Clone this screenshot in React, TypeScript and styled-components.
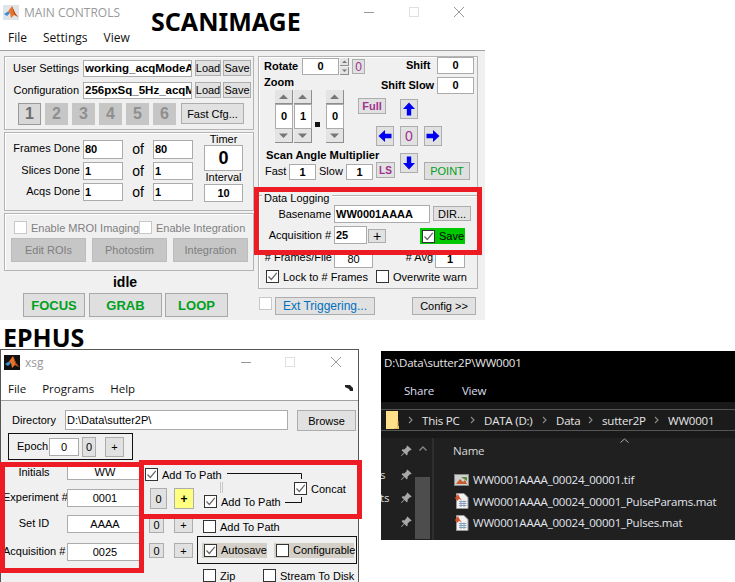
import styled, { createGlobalStyle } from "styled-components";
import { BsPinAngleFill } from "react-icons/bs";

const GlobalStyle = createGlobalStyle`
  html, body {
    margin: 0;
    padding: 0;
    background: #fff;
  }
  * {
    box-sizing: border-box;
  }
`;

const Desktop = styled.div`
  position: relative;
  width: 735px;
  height: 582px;
  overflow: hidden;
  background: #fff;
  font-family: "Liberation Sans", Arial, sans-serif;
  font-size: 11px;
  color: #000;
`;

const Caption = styled.div<{ $x: number; $y: number; $size: number }>`
  position: absolute;
  left: ${(p) => p.$x}px;
  top: ${(p) => p.$y}px;
  font-family: "Noto Sans", sans-serif;
  font-weight: 700;
  font-size: ${(p) => p.$size}px;
  line-height: 30px;
  z-index: 3;
`;

const Highlight = styled.div<{ $x: number; $y: number; $w: number; $h: number }>`
  position: absolute;
  left: ${(p) => p.$x}px;
  top: ${(p) => p.$y}px;
  width: ${(p) => p.$w}px;
  height: ${(p) => p.$h}px;
  border: 5px solid #ed1c24;
  z-index: 4;
`;

/* ---- windows ---- */

const MainWindow = styled.div`
  position: absolute;
  left: 0;
  top: 0;
  width: 485px;
  height: 320px;
  background: #f0f0f0;
`;

const XsgWindow = styled.div`
  position: absolute;
  left: 0;
  top: 349px;
  width: 359px;
  height: 233px;
  overflow: hidden;
  background: #f0f0f0;
  border: 1px solid #555;
  border-bottom: none;
`;

const TitleBar = styled.div`
  height: 24px;
  display: flex;
  align-items: center;
  padding-left: 3px;
  background: #fff;
  color: #999;
  font-family: "Open Sans", sans-serif;
  font-size: 12px;
`;

const WindowTitle = styled.span`
  margin-left: 5px;
`;

const WinButtons = styled.svg<{ $right: number }>`
  margin-left: auto;
  margin-right: ${(p) => p.$right}px;
`;

const MenuBar = styled.div<{ $gap: number; $pad: number; $pt?: number; $size?: number }>`
  height: 27px;
  display: flex;
  align-items: center;
  gap: ${(p) => p.$gap}px;
  padding: ${(p) => p.$pt ?? 0}px 0 0 ${(p) => p.$pad}px;
  background: #fff;
  border-bottom: 1px solid #a0a0a0;
  font-family: "Open Sans", sans-serif;
  font-size: ${(p) => p.$size ?? 12}px;
  color: #111;
`;

const ResizeMark = styled.svg`
  margin-left: auto;
  margin-right: 5px;
`;

const MainBody = styled.div`
  display: flex;
  padding: 5px 0 0 4px;
  gap: 4px;
`;

const Col = styled.div<{ $w: number }>`
  width: ${(p) => p.$w}px;
  flex-shrink: 0;
  display: flex;
  flex-direction: column;
`;

const Panel = styled.div<{ $h: number; $mt?: number }>`
  position: relative;
  height: ${(p) => p.$h}px;
  margin-top: ${(p) => p.$mt ?? 0}px;
  border: 1px solid #b4b4b4;
  box-shadow: inset 1px 1px 0 #fff;
`;

const Row = styled.div<{ $mt?: number; $pl?: number; $gap?: number }>`
  display: flex;
  align-items: flex-start;
  margin-top: ${(p) => p.$mt ?? 0}px;
  padding-left: ${(p) => p.$pl ?? 0}px;
  gap: ${(p) => p.$gap ?? 0}px;
`;

const Label = styled.div<{ $w?: number; $align?: string; $h?: number; $bold?: boolean; $size?: number; $ml?: number; $mt?: number }>`
  width: ${(p) => (p.$w ? `${p.$w}px` : "auto")};
  height: ${(p) => p.$h ?? 17}px;
  line-height: ${(p) => p.$h ?? 17}px;
  margin-left: ${(p) => p.$ml ?? 0}px;
  margin-top: ${(p) => p.$mt ?? 0}px;
  text-align: ${(p) => p.$align ?? "left"};
  font-size: ${(p) => p.$size ?? 11}px;
  font-weight: ${(p) => (p.$bold ? 700 : 400)};
  white-space: nowrap;
  flex-shrink: 0;
`;

const Field = styled.div<{ $w: number; $h: number; $align?: string; $bold?: boolean; $size?: number; $ml?: number; $mt?: number }>`
  width: ${(p) => p.$w}px;
  height: ${(p) => p.$h}px;
  line-height: ${(p) => p.$h - 2}px;
  margin-left: ${(p) => p.$ml ?? 0}px;
  margin-top: ${(p) => p.$mt ?? 0}px;
  padding: 0 1px;
  flex-shrink: 0;
  overflow: hidden;
  white-space: nowrap;
  background: #fff;
  border: 1px solid #ababab;
  text-align: ${(p) => p.$align ?? "left"};
  font-size: ${(p) => p.$size ?? 11}px;
  font-weight: ${(p) => (p.$bold ? 700 : 400)};
`;

const Btn = styled.button<{ $w: number; $h: number; $ml?: number; $mt?: number; $color?: string; $bold?: boolean; $size?: number; $bg?: string }>`
  width: ${(p) => p.$w}px;
  height: ${(p) => p.$h}px;
  margin: ${(p) => p.$mt ?? 0}px 0 0 ${(p) => p.$ml ?? 0}px;
  padding: 0;
  display: flex;
  align-items: center;
  justify-content: center;
  flex-shrink: 0;
  background: ${(p) => p.$bg ?? "#e1e1e1"};
  border: 1px solid #adadad;
  color: ${(p) => p.$color ?? "#000"};
  font-family: "Liberation Sans", Arial, sans-serif;
  font-size: ${(p) => p.$size ?? 11}px;
  font-weight: ${(p) => (p.$bold ? 700 : 400)};
  white-space: nowrap;
`;

const CheckWrap = styled.div<{ $w?: number; $bg?: string; $h?: number; $color?: string; $pl?: number }>`
  display: flex;
  align-items: center;
  gap: 4px;
  flex-shrink: 0;
  width: ${(p) => (p.$w ? `${p.$w}px` : "auto")};
  height: ${(p) => p.$h ?? 13}px;
  padding-left: ${(p) => p.$pl ?? 0}px;
  background: ${(p) => p.$bg ?? "transparent"};
  color: ${(p) => p.$color ?? "#000"};
  white-space: nowrap;
`;

const CheckBox = styled.span<{ $muted?: boolean }>`
  width: 13px;
  height: 13px;
  display: flex;
  align-items: center;
  justify-content: center;
  flex-shrink: 0;
  background: #fff;
  border: 1px solid ${(p) => (p.$muted ? "#c8c8c8" : "#333")};
`;

interface CheckProps {
  label?: string;
  checked?: boolean;
  muted?: boolean;
  w?: number;
  h?: number;
  bg?: string;
  pl?: number;
  color?: string;
}

function Check({ label, checked, muted, w, h, bg, pl, color }: CheckProps) {
  return (
    <CheckWrap $w={w} $h={h} $bg={bg} $pl={pl} $color={color}>
      <CheckBox $muted={muted}>
        {checked && (
          <svg width="11" height="11" viewBox="0 0 11 11">
            <path d="M1.5 5.5 L4.3 8.5 L9.8 1.8" fill="none" stroke="#666" strokeWidth="1.2" />
          </svg>
        )}
      </CheckBox>
      {label && <span>{label}</span>}
    </CheckWrap>
  );
}

function MatlabLogo({ dark }: { dark?: boolean }) {
  return (
    <svg width="16" height="15" viewBox="0 0 16 15">
      <rect width="16" height="15" fill={dark ? "#111" : "#dfe4e8"} />
      <path d="M1 9 L5 6.5 L7 8 L4 11 Z" fill="#3b8fd0" />
      <path d="M5 6.5 L9 1 L12 8 L15 12 L11 10 L8 13 L7 8 Z" fill="#e8742a" />
      <path d="M9 1 L12 8 L15 12 L11 9 Z" fill="#b5421c" />
    </svg>
  );
}

function WindowControls({ right, gapA, gapB }: { right: number; gapA: number; gapB: number }) {
  return (
    <WinButtons $right={right} width={gapB + 11} height="12" viewBox={`0 0 ${gapB + 11} 12`}>
      <path d="M0 6.5 H10" stroke="#999" />
      <rect x={gapA + 0.5} y="1.5" width="9" height="9" fill="none" stroke="#e0e0e0" />
      <path d={`M${gapB} 1 L${gapB + 10} 11 M${gapB + 10} 1 L${gapB} 11`} stroke="#999" />
    </WinButtons>
  );
}

function Arrow({ dir }: { dir: "up" | "down" | "left" | "right" }) {
  const rot = { up: 0, right: 90, down: 180, left: 270 }[dir];
  return (
    <svg width="14" height="14" viewBox="0 0 14 14">
      <path transform={`rotate(${rot} 7 7)`} d="M7 0.5 L13 7 H9.2 V13.5 H4.8 V7 H1 Z" fill="#0000f0" />
    </svg>
  );
}

function Tri({ down, size = 9, color = "#777" }: { down?: boolean; size?: number; color?: string }) {
  return (
    <svg width={size} height={size / 2 + 1} viewBox="0 0 10 6">
      <path d={down ? "M0 0.5 H10 L5 5.5 Z" : "M0 5.5 H10 L5 0.5 Z"} fill={color} />
    </svg>
  );
}

/* ---- scanimage, left column ---- */

const NumberBtn = styled(Btn).attrs({ $w: 23, $h: 22, $bold: true, $size: 16 })<{ $on?: boolean }>`
  background: ${(p) => (p.$on ? "#d8d8d8" : "#c6c6c6")};
  color: ${(p) => (p.$on ? "#6e6e6e" : "#8f8f8f")};
  border-color: ${(p) => (p.$on ? "#9a9a9a" : "#c6c6c6")};
`;

const DoneGrid = styled.div`
  display: grid;
  grid-template-columns: 78px 40px 30px 40px;
  grid-template-rows: 19px 18px 18px;
  row-gap: 3px;
  margin-top: 7px;
  width: 188px;
`;

const DoneLabel = styled.div`
  padding-right: 3px;
  text-align: right;
  line-height: 17px;
  white-space: nowrap;
`;

const Of = styled.div`
  text-align: center;
  font-size: 14px;
  line-height: 18px;
`;

const TimerCol = styled.div`
  width: 39px;
  margin-left: 11px;
  display: flex;
  flex-direction: column;
  align-items: center;
`;

const DimBtn = styled(Btn).attrs({ $w: 75, $h: 24 })`
  background: #c6c6c6;
  border-color: #bcbcbc;
  color: #7f7f7f;
`;

const IdleText = styled.div`
  height: 22px;
  line-height: 22px;
  padding-right: 8px;
  text-align: center;
  font-weight: 700;
  font-size: 14px;
`;

const GoBtn = styled(Btn).attrs({ $h: 24, $color: "#00a020", $bold: true, $size: 13 })`
  background: #dfdfdf;
  border-color: #a8a8a8;
`;

/* ---- scanimage, right column ---- */

const SplitPanel = styled(Panel)`
  display: flex;
`;

const SpinColumn = styled.div`
  display: flex;
  flex-direction: column;
  width: 18px;
  flex-shrink: 0;
`;

const SpinBtn = styled.button<{ $h?: number }>`
  height: ${(p) => p.$h ?? 14}px;
  padding: 0;
  display: flex;
  align-items: center;
  justify-content: center;
  background: #e4e4e4;
  border: none;
  border-right: 1px solid #8e8e8e;
  border-bottom: 1px solid #8e8e8e;
`;

const SpinValue = styled.div`
  height: 25px;
  line-height: 23px;
  text-align: center;
  font-weight: 700;
  font-size: 11px;
  background: #fff;
  border: 1px solid #ababab;
`;

const Dot = styled.span`
  width: 5px;
  height: 5px;
  margin: 32px 5px 0 2px;
  background: #111;
  flex-shrink: 0;
`;

const RotateSpin = styled.div`
  width: 9px;
  height: 17px;
  margin-left: 1px;
  display: flex;
  flex-direction: column;
  gap: 1px;
`;

const Pad = styled.div`
  display: grid;
  grid-template-columns: 18px 18px 18px;
  grid-template-rows: 20px 20px 20px;
  column-gap: 6px;
  row-gap: 7px;
  margin: 5px 0 0 -20px;
  width: 66px;
`;

const PadBtn = styled(Btn).attrs({ $w: 18, $h: 20 })<{ $col: number; $row: number }>`
  grid-column: ${(p) => p.$col};
  grid-row: ${(p) => p.$row};
`;

const PointBtn = styled(Btn).attrs({ $w: 46, $h: 18, $color: "#00a020", $size: 11 })`
  grid-column: 3;
  grid-row: 3;
  margin-top: 9px;
  background: #dfdfdf;
`;

const Legend = styled.div`
  position: absolute;
  left: 3px;
  top: -5px;
  width: 70px;
  padding-left: 2px;
  background: #f0f0f0;
  line-height: 14px;
  white-space: nowrap;
`;

const SaveTag = styled.div`
  width: 45px;
  height: 16px;
  margin: 2px 12px 0 auto;
  display: flex;
  align-items: center;
  gap: 4px;
  padding-left: 2px;
  background: #00c800;
  white-space: nowrap;
`;

const GrowSpacer = styled.div`
  flex: 1;
`;

/* ---- xsg ---- */

const DirRow = styled.div`
  display: flex;
  align-items: flex-start;
  padding: 9px 0 0 11px;
`;

const EpochBox = styled.div`
  width: 125px;
  height: 27px;
  margin: 2px 0 0 7px;
  display: flex;
  align-items: flex-start;
  border: 1px solid #111;
  padding: 3px 0 0 8px;
`;

const XsgMain = styled.div`
  display: flex;
  margin-top: 4px;
`;

const NamingGrid = styled.div`
  width: 144px;
  flex-shrink: 0;
  display: grid;
  grid-template-columns: 62px 76px;
  grid-template-rows: 25px 26px 28px 18px;
  column-gap: 2px;
  padding-left: 2px;
`;

const NamingLabel = styled.div`
  text-align: center;
  line-height: 16px;
  white-space: nowrap;
`;

const Pathways = styled.div`
  position: relative;
  flex: 1;
  display: flex;
  flex-direction: column;
`;

const ConcatGroup = styled.div`
  display: flex;
  height: 52px;
`;

const ConcatLeft = styled.div`
  width: 149px;
  flex-shrink: 0;
  display: flex;
  flex-direction: column;
  padding-top: 4px;
`;

const ConcatRight = styled.div`
  padding-top: 18px;
`;

const Wires = styled.svg`
  position: absolute;
  left: 0;
  top: 0;
  pointer-events: none;
`;

const CheckSlot = styled.div<{ $mt?: number }>`
  margin-left: 10px;
  margin-top: ${(p) => p.$mt ?? 7}px;
`;

const AutoBox = styled.div`
  width: 160px;
  height: 28px;
  margin-left: 4px;
  display: flex;
  align-items: center;
  padding-left: 4px;
  gap: 7px;
  border: 1px solid #111;
  flex-shrink: 0;
`;

/* ---- explorer ---- */

const Explorer = styled.div`
  position: absolute;
  left: 381px;
  top: 351px;
  width: 354px;
  height: 189px;
  display: flex;
  flex-direction: column;
  background: #000;
  color: #fff;
  font-family: "Open Sans", sans-serif;
  font-size: 11.5px;
  letter-spacing: -0.2px;
  overflow: hidden;
`;

const ExpTitle = styled.div`
  height: 24px;
  line-height: 24px;
  padding-left: 3px;
  color: #e8e8e8;
`;

const Ribbon = styled.div`
  height: 27px;
  display: flex;
  align-items: center;
  gap: 28px;
  padding: 3px 0 0 23px;
  color: #dde;
`;

const AddressWrap = styled.div`
  padding: 7px 0;
  background: #191919;
`;

const AddressBar = styled.div`
  height: 22px;
  display: flex;
  align-items: center;
  background: #1b1b1b;
  border-top: 1px solid #555;
  border-bottom: 1px solid #555;
  padding-left: 5px;
  color: #e6e6e6;
`;

const Crumb = styled.span<{ $w: number }>`
  width: ${(p) => p.$w}px;
  flex-shrink: 0;
  white-space: nowrap;
`;

const ChevronSvg = styled.svg`
  width: 23px;
  flex-shrink: 0;
`;

const ExpContent = styled.div`
  flex: 1;
  display: flex;
  background: #202020;
`;

const NavPane = styled.div`
  position: relative;
  width: 34px;
  flex-shrink: 0;
  display: flex;
  flex-direction: column;
  align-items: flex-end;
  padding: 7px 3px 0 0;
  gap: 11.5px;
  color: #a8a8a8;
`;

const NavClip = styled.span<{ $top: number }>`
  position: absolute;
  left: -1px;
  top: ${(p) => p.$top}px;
  color: #ddd;
  line-height: 14px;
`;

const Scroller = styled.div`
  width: 15px;
  flex-shrink: 0;
  display: flex;
  flex-direction: column;
  align-items: center;
  padding-top: 8px;
  margin-right: 2px;
`;

const Thumb = styled.div`
  width: 15px;
  height: 62px;
  margin-top: 26px;
  background: #4d4d4d;
`;

const ListPane = styled.div`
  position: relative;
  flex: 1;
  padding-left: 19px;
  border-left: 2px solid #2e2e2e;
`;

const SortCaret = styled.svg`
  position: absolute;
  left: 186px;
  top: 0;
`;

const NameHead = styled.div`
  height: 30px;
  padding-top: 5px;
  color: #d8d8d8;
  line-height: 16px;
  margin-bottom: 1px;
`;

const FileRow = styled.div`
  height: 21.5px;
  display: flex;
  align-items: center;
  gap: 4px;
  margin-left: 1px;
  color: #e2e6ee;
  white-space: nowrap;
`;

const CrumbGroup = styled.span`
  display: contents;
`;

function TifIcon() {
  return (
    <svg width="15" height="14" viewBox="0 0 15 14">
      <rect x="0.5" y="1.5" width="14" height="11" fill="#cfcfcf" stroke="#888" />
      <path d="M2 11 L6 6 L9 9 L11 7 L13 11 Z" fill="#c75b2a" />
      <path d="M7 4 H13 V8 L10 6 Z" fill="#5a8a3a" />
    </svg>
  );
}

function MatIcon() {
  return (
    <svg width="15" height="16" viewBox="0 0 15 16">
      <path d="M2.5 0.5 H10 L14 4.5 V15.5 H2.5 Z" fill="#f2f2f2" stroke="#999" />
      <path d="M1 5 L4 1 L6 5 L8 7 L5 6 L3 8 Z" fill="#d4532a" />
      <path d="M5 8.5 H12.5 M5 10.5 H12.5 M5 12.5 H12.5 M7 7.5 V14 M10 7.5 V14" stroke="#7d9ab8" strokeWidth="0.9" />
    </svg>
  );
}

function Crumbs({ items }: { items: [string, number][] }) {
  return (
    <>
      {items.map(([text, w]) => (
        <CrumbGroup key={text}>
          <ChevronSvg height="8" viewBox="0 0 23 8">
            <path d="M10 1 L13 4 L10 7" fill="none" stroke="#888" strokeWidth="1.2" />
          </ChevronSvg>
          <Crumb $w={w}>{text}</Crumb>
        </CrumbGroup>
      ))}
    </>
  );
}

export default function App() {
  return (
    <Desktop>
      <GlobalStyle />

      <MainWindow>
        <TitleBar>
          <MatlabLogo />
          <WindowTitle>MAIN CONTROLS</WindowTitle>
          <WindowControls right={20} gapA={45} gapB={90} />
        </TitleBar>
        <MenuBar $gap={16} $pad={8}>
          <span>File</span>
          <span>Settings</span>
          <span>View</span>
        </MenuBar>

        <MainBody>
          <Col $w={250}>
            <Panel $h={74}>
              <Row $mt={3}>
                <Label $w={74} $align="right" $h={16}>User Settings</Label>
                <Field $w={109} $h={17} $ml={4} $bold $size={11.5}>working_acqModeA</Field>
                <Btn $w={26} $h={16} $ml={3}>Load</Btn>
                <Btn $w={28} $h={16} $ml={2}>Save</Btn>
              </Row>
              <Row $mt={5}>
                <Label $w={74} $align="right" $h={16}>Configuration</Label>
                <Field $w={109} $h={17} $ml={4} $bold $size={11.5}>256pxSq_5Hz_acqM</Field>
                <Btn $w={26} $h={16} $ml={3}>Load</Btn>
                <Btn $w={28} $h={16} $ml={2}>Save</Btn>
              </Row>
              <Row $mt={4} $pl={13} $gap={4}>
                <NumberBtn $on>1</NumberBtn>
                <NumberBtn>2</NumberBtn>
                <NumberBtn>3</NumberBtn>
                <NumberBtn>4</NumberBtn>
                <NumberBtn>5</NumberBtn>
                <NumberBtn>6</NumberBtn>
                <Btn $w={63} $h={21} $ml={1}>Fast Cfg...</Btn>
              </Row>
            </Panel>

            <Panel $h={79} $mt={2}>
              <Row>
                <DoneGrid>
                  <DoneLabel>Frames Done</DoneLabel>
                  <Field $w={40} $h={19} $bold>80</Field>
                  <Of>of</Of>
                  <Field $w={40} $h={19} $bold>80</Field>
                  <DoneLabel>Slices Done</DoneLabel>
                  <Field $w={40} $h={18} $bold>1</Field>
                  <Of>of</Of>
                  <Field $w={40} $h={18} $bold>1</Field>
                  <DoneLabel>Acqs Done</DoneLabel>
                  <Field $w={40} $h={18} $bold>1</Field>
                  <Of>of</Of>
                  <Field $w={40} $h={18} $bold>1</Field>
                </DoneGrid>
                <TimerCol>
                  <Label $h={12}>Timer</Label>
                  <Field $w={39} $h={26} $align="center" $bold $size={18}>0</Field>
                  <Label $h={13}>Interval</Label>
                  <Field $w={39} $h={18} $align="center" $bold>10</Field>
                </TimerCol>
              </Row>
            </Panel>

            <Panel $h={58} $mt={2}>
              <Row $mt={7} $pl={9}>
                <Check muted w={125} label="Enable MROI Imaging" color="#7f7f7f" />
                <Check muted label="Enable Integration" color="#7f7f7f" />
              </Row>
              <Row $mt={4} $pl={6} $gap={6}>
                <DimBtn>Edit ROIs</DimBtn>
                <DimBtn>Photostim</DimBtn>
                <DimBtn>Integration</DimBtn>
              </Row>
            </Panel>

            <IdleText>idle</IdleText>
            <Row $pl={19}>
              <GoBtn $w={62}>FOCUS</GoBtn>
              <GoBtn $w={73} $ml={4}>GRAB</GoBtn>
              <GoBtn $w={63} $ml={3}>LOOP</GoBtn>
            </Row>
          </Col>

          <Col $w={220}>
            <SplitPanel $h={132}>
              <Col $w={137}>
                <Row $mt={1} $pl={5}>
                  <Label $w={38} $bold>Rotate</Label>
                  <Field $w={37} $h={17} $align="center" $bold>0</Field>
                  <RotateSpin>
                    <SpinBtn $h={8}><Tri size={5} /></SpinBtn>
                    <SpinBtn $h={8}><Tri size={5} down /></SpinBtn>
                  </RotateSpin>
                  <Btn $w={13} $h={15} $ml={3} $mt={1} $color="#a03090" $size={12}>0</Btn>
                </Row>
                <Row $pl={5}>
                  <Label $h={15} $bold>Zoom</Label>
                </Row>
                <Row $pl={16} $gap={1}>
                  <SpinColumn>
                    <SpinBtn><Tri /></SpinBtn>
                    <SpinValue>0</SpinValue>
                    <SpinBtn><Tri down /></SpinBtn>
                  </SpinColumn>
                  <SpinColumn>
                    <SpinBtn><Tri /></SpinBtn>
                    <SpinValue>1</SpinValue>
                    <SpinBtn><Tri down /></SpinBtn>
                  </SpinColumn>
                  <Dot />
                  <SpinColumn>
                    <SpinBtn><Tri /></SpinBtn>
                    <SpinValue>0</SpinValue>
                    <SpinBtn><Tri down /></SpinBtn>
                  </SpinColumn>
                  <Btn $w={28} $h={16} $ml={13} $mt={8} $color="#a03090" $bold>Full</Btn>
                </Row>
                <Row $mt={5} $pl={7}>
                  <Label $h={14} $bold $size={11.2}>Scan Angle Multiplier</Label>
                </Row>
                <Row $pl={6}>
                  <Label $w={24} $mt={1}>Fast</Label>
                  <Field $w={27} $h={16} $mt={2} $align="center" $bold>1</Field>
                  <Label $w={27} $ml={3} $mt={1}>Slow</Label>
                  <Field $w={27} $h={16} $mt={2} $align="center" $bold>1</Field>
                  <Btn $w={19} $h={16} $ml={3} $color="#a03090" $bold $size={10}>LS</Btn>
                </Row>
              </Col>
              <Col $w={81}>
                <Row>
                  <Label $w={31} $ml={10} $bold $h={17}>Shift</Label>
                  <Field $w={37} $h={17} $align="center" $bold>0</Field>
                </Row>
                <Row $mt={3}>
                  <Label $ml={-15} $w={56} $bold $h={17}>Shift Slow</Label>
                  <Field $w={37} $h={17} $align="center" $bold>0</Field>
                </Row>
                <Pad>
                  <PadBtn $col={2} $row={1}><Arrow dir="up" /></PadBtn>
                  <PadBtn $col={1} $row={2}><Arrow dir="left" /></PadBtn>
                  <PadBtn $col={2} $row={2} $color="#a03090" $size={14}>0</PadBtn>
                  <PadBtn $col={3} $row={2}><Arrow dir="right" /></PadBtn>
                  <PadBtn $col={2} $row={3}><Arrow dir="down" /></PadBtn>
                  <PointBtn>POINT</PointBtn>
                </Pad>
              </Col>
            </SplitPanel>

            <Panel $h={94} $mt={7}>
              <Legend>Data Logging</Legend>
              <Row $mt={9}>
                <Label $w={72} $align="right" $h={18}>Basename</Label>
                <Field $w={96} $h={18} $ml={3} $bold>WW0001AAAA</Field>
                <Btn $w={38} $h={15} $ml={3} $mt={1}>DIR...</Btn>
              </Row>
              <Row $mt={3}>
                <Label $w={72} $align="right" $h={18}>Acquisition #</Label>
                <Field $w={33} $h={18} $ml={3} $bold>25</Field>
                <Btn $w={18} $h={14} $ml={1} $mt={3} $size={14}>+</Btn>
                <GrowSpacer />
                <SaveTag>
                  <Check checked />
                  <span>Save</span>
                </SaveTag>
              </Row>
              <Row $mt={6}>
                <Label $w={73} $align="right" $h={14}># Frames/File</Label>
                <Field $w={39} $h={18} $ml={2} $align="center">80</Field>
                <Label $w={60} $align="right" $h={14}># Avg</Label>
                <Field $w={30} $h={18} $ml={2} $align="center" $bold>1</Field>
              </Row>
              <Row $mt={2} $pl={7}>
                <Check checked w={110} label="Lock to # Frames" />
                <Check label="Overwrite warn" />
              </Row>
            </Panel>

            <Row $mt={8} $pl={1}>
              <Check muted />
              <Btn $w={100} $h={18} $ml={3} $color="#0070c0" $size={12}>Ext Triggering...</Btn>
              <Btn $w={64} $h={18} $ml={37}>Config &gt;&gt;</Btn>
            </Row>
          </Col>
        </MainBody>
      </MainWindow>
      <Caption $x={151} $y={6} $size={25}>SCANIMAGE</Caption>

      <Caption $x={3} $y={322} $size={25}>EPHUS</Caption>
      <XsgWindow>
        <TitleBar>
          <MatlabLogo dark />
          <WindowTitle>xsg</WindowTitle>
          <WindowControls right={16} gapA={44} gapB={90} />
        </TitleBar>
        <MenuBar $gap={16} $pad={7} $pt={2} $size={11.5}>
          <span>File</span>
          <span>Programs</span>
          <span>Help</span>
          <ResizeMark width="8" height="6" viewBox="0 0 8 6">
            <path d="M0 0 H5 L8 3 V6 H5 L4 4 L0 2 Z" fill="#222" />
          </ResizeMark>
        </MenuBar>
        <DirRow>
          <Label $w={53} $h={20}>Directory</Label>
          <Field $w={223} $h={20}>D:\Data\sutter2P\</Field>
          <Btn $w={59} $h={21} $ml={9}>Browse</Btn>
        </DirRow>
        <EpochBox>
          <Label $w={32} $h={18}>Epoch</Label>
          <Field $w={30} $h={18} $mt={1} $align="center">0</Field>
          <Btn $w={14} $h={20} $ml={3}>0</Btn>
          <Btn $w={19} $h={20} $ml={9}>+</Btn>
        </EpochBox>
        <XsgMain>
          <NamingGrid>
            <NamingLabel>Initials</NamingLabel>
            <Field $w={76} $h={16} $align="center">WW</Field>
            <NamingLabel>Experiment #</NamingLabel>
            <Field $w={76} $h={18} $align="center">0001</Field>
            <NamingLabel>Set ID</NamingLabel>
            <Field $w={76} $h={18} $align="center">AAAA</Field>
            <NamingLabel>Acquisition #</NamingLabel>
            <Field $w={76} $h={18} $align="center">0025</Field>
          </NamingGrid>
          <Pathways>
            <ConcatGroup>
              <ConcatLeft>
                <Check checked label="Add To Path" />
                <Row $mt={7} $pl={5}>
                  <Btn $w={17} $h={21}>0</Btn>
                  <Btn $w={20} $h={21} $ml={7} $bg="#ffff80" $bold $size={12}>+</Btn>
                  <CheckSlot>
                    <Check checked label="Add To Path" />
                  </CheckSlot>
                </Row>
              </ConcatLeft>
              <ConcatRight>
                <Check checked label="Concat" />
              </ConcatRight>
            </ConcatGroup>
            <Wires width="213" height="60" viewBox="0 0 213 60">
              <path d="M82 9.5 H156.5 V15 M140 38.5 H156.5 V33" fill="none" stroke="#111" />
              <path d="M75.5 18 V29 M77.5 18 V29" fill="none" stroke="#c8c8c8" />
            </Wires>
            <Row $pl={4}>
              <Btn $w={15} $h={17}>0</Btn>
              <Btn $w={19} $h={17} $ml={10}>+</Btn>
              <CheckSlot $mt={4}>
                <Check label="Add To Path" />
              </CheckSlot>
            </Row>
            <Row $mt={3} $pl={4}>
              <Btn $w={15} $h={15} $mt={7}>0</Btn>
              <Btn $w={19} $h={15} $ml={10} $mt={7}>+</Btn>
              <AutoBox>
                <Check checked w={65} h={15} bg="#d4d0c8" pl={2} label="Autosave" />
                <Check w={80} h={15} bg="#d4d0c8" pl={2} label="Configurable" />
              </AutoBox>
            </Row>
            <Row $mt={5} $pl={58}>
              <Check w={60} label="Zip" />
              <Check label="Stream To Disk" />
            </Row>
          </Pathways>
        </XsgMain>
      </XsgWindow>

      <Explorer>
        <ExpTitle>D:\Data\sutter2P\WW0001</ExpTitle>
        <Ribbon>
          <span>Share</span>
          <span>View</span>
        </Ribbon>
        <AddressWrap>
          <AddressBar>
            <svg width="13" height="18" viewBox="0 0 13 18">
              <path d="M0 0 H12 V15 H13 V18 H0 Z" fill="#ffe08a" />
              <path d="M12 10 V18 H8" fill="none" stroke="#d9a63d" />
            </svg>
            <Crumbs items={[["This PC", 39], ["DATA (D:)", 49], ["Data", 23], ["sutter2P", 43], ["WW0001", 45]]} />
          </AddressBar>
        </AddressWrap>
        <ExpContent>
          <NavPane>
            <BsPinAngleFill size={12} />
            <BsPinAngleFill size={12} />
            <BsPinAngleFill size={12} />
            <BsPinAngleFill size={12} />
            <NavClip $top={30}>s</NavClip>
            <NavClip $top={53}>ts</NavClip>
          </NavPane>
          <Scroller>
            <svg width="8" height="5" viewBox="0 0 8 5">
              <path d="M0.5 4.5 L4 1 L7.5 4.5" fill="none" stroke="#888" strokeWidth="1.3" />
            </svg>
            <Thumb />
          </Scroller>
          <ListPane>
            <SortCaret width="9" height="5" viewBox="0 0 9 5">
              <path d="M0.5 4.5 L4.5 1 L8.5 4.5" fill="none" stroke="#aaa" />
            </SortCaret>
            <NameHead>Name</NameHead>
            <FileRow><TifIcon />WW0001AAAA_00024_00001.tif</FileRow>
            <FileRow><MatIcon />WW0001AAAA_00024_00001_PulseParams.mat</FileRow>
            <FileRow><MatIcon />WW0001AAAA_00024_00001_Pulses.mat</FileRow>
          </ListPane>
        </ExpContent>
      </Explorer>

      <Highlight $x={254} $y={187} $w={228} $h={68} />
      <Highlight $x={0} $y={462} $w={144} $h={111} />
      <Highlight $x={139} $y={460} $w={223} $h={59} />
    </Desktop>
  );
}
